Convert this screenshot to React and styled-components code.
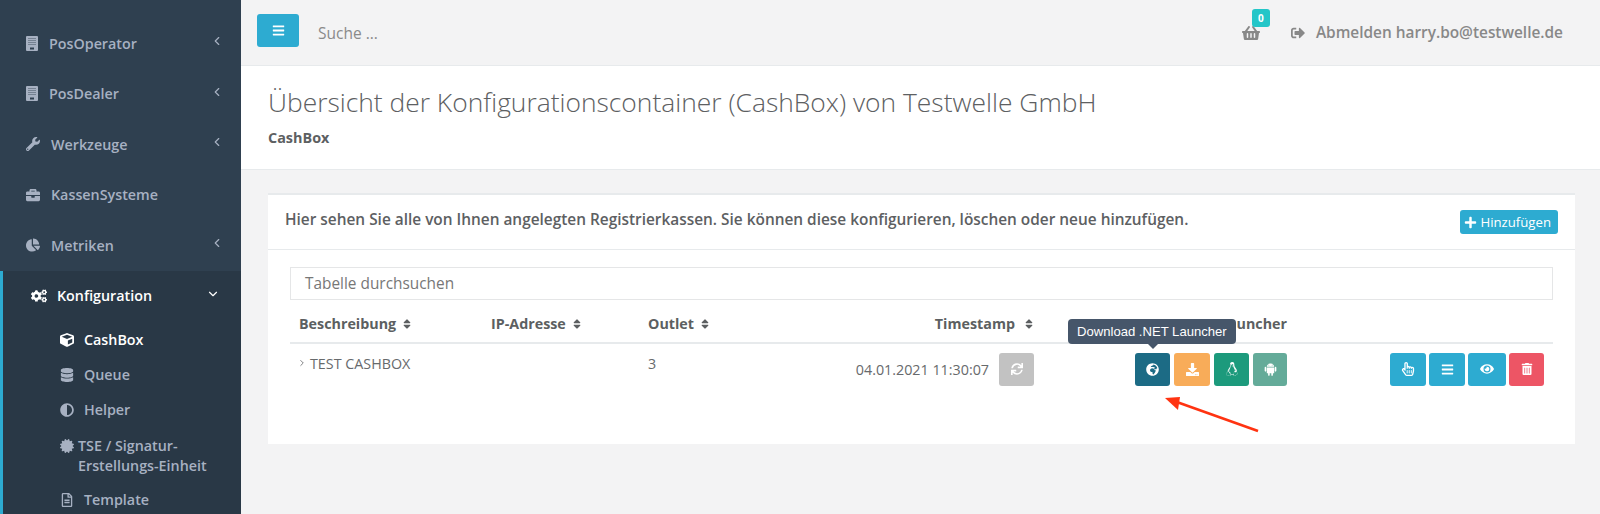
import React from 'react';
import styled, { createGlobalStyle } from 'styled-components';
import {
  FaWrench, FaBriefcase, FaChartPie, FaCogs, FaCube, FaDatabase, FaAdjust,
  FaCertificate, FaRegFileAlt, FaBars, FaShoppingBasket, FaSignOutAlt, FaPlus, FaSort,
  FaSync, FaGlobeAfrica, FaDownload, FaLinux, FaRegHandPointer, FaEye, FaTrashAlt,
} from 'react-icons/fa';
import { IoLogoAndroid } from 'react-icons/io';
import { ChevronLeft, ChevronDown, ChevronRight } from 'lucide-react';

const GlobalStyle = createGlobalStyle`
  html, body { margin: 0; height: 100%; overflow: hidden; }
  body { font-family: "Open Sans", "Liberation Sans", sans-serif; font-size: 14.3px; color: #676a6c; background: #f3f3f4; }
`;

// the operator/dealer icon is a tall block with stripes and a small door
const TerminalIcon = () => (
  <svg width="12" height="15" viewBox="0 0 12 15">
    <rect width="12" height="15" rx="1" fill="currentColor" />
    <path d="M2 2.5h8M2 4.5h8M2 6.5h8M2 8.5h8" stroke="#2f4050" strokeWidth="0.7" strokeOpacity="0.6" />
    <rect x="4" y="11.5" width="4" height="2" fill="#2f4050" />
  </svg>
);

const mainMenu = [
  { icon: TerminalIcon, label: 'PosOperator', arrow: true, gap: 11 },
  { icon: TerminalIcon, label: 'PosDealer', arrow: true, gap: 11 },
  { icon: FaWrench, label: 'Werkzeuge', arrow: true, gap: 11 },
  { icon: FaBriefcase, label: 'KassenSysteme', gap: 11 },
  { icon: FaChartPie, label: 'Metriken', arrow: true, gap: 11 },
];

const subMenu = [
  { icon: FaCube, label: 'CashBox', active: true },
  { icon: FaDatabase, label: 'Queue' },
  { icon: FaAdjust, label: 'Helper' },
  { icon: FaCertificate, label: 'TSE / Signatur-Erstellungs-Einheit', tight: true },
  { icon: FaRegFileAlt, label: 'Template' },
];

const App = () => (
  <Page>
    <GlobalStyle />
    <Sidebar>
      {mainMenu.map((item) => (
        <NavItem key={item.label}>
          <item.icon size={14} />
          <NavLabel $gap={item.gap}>{item.label}</NavLabel>
          {item.arrow && <NavArrow $shift={9}><ChevronLeft size={14} strokeWidth={2} /></NavArrow>}
        </NavItem>
      ))}
      <ActiveGroup>
        <ActiveHead>
          <FaCogs size={16} />
          <NavLabel $gap={10}>Konfiguration</NavLabel>
          <NavArrow $shift={5}><ChevronDown size={14} strokeWidth={2} /></NavArrow>
        </ActiveHead>
        {subMenu.map((item) => (
          <SubItem key={item.label} $active={item.active} $tight={item.tight}>
            <SubIcon $tight={item.tight}><item.icon size={14} /></SubIcon>
            <SubLabel $tight={item.tight}>{item.label}</SubLabel>
          </SubItem>
        ))}
      </ActiveGroup>
    </Sidebar>

    <Main>
      <TopBar>
        <MenuButton><FaBars size={13} /></MenuButton>
        <Search>Suche ...</Search>
        <Basket>
          <FaShoppingBasket size={18} />
          <BasketBadge>0</BasketBadge>
        </Basket>
        <Logout>
          <FaSignOutAlt size={14} />
          Abmelden harry.bo@testwelle.de
        </Logout>
      </TopBar>

      <Heading>
        <Title>Übersicht der Konfigurationscontainer (CashBox) von Testwelle GmbH</Title>
        <Crumb>CashBox</Crumb>
      </Heading>

      <Content>
        <Card>
          <CardHead>
            <CardText>Hier sehen Sie alle von Ihnen angelegten Registrierkassen. Sie können diese konfigurieren, löschen oder neue hinzufügen.</CardText>
            <AddButton><FaPlus size={13} />Hinzufügen</AddButton>
          </CardHead>
          <CardBody>
            <Filter>Tabelle durchsuchen</Filter>
            <HeadRow>
              <HeadCell>Beschreibung <FaSort size={12} /></HeadCell>
              <HeadCell>IP-Adresse <FaSort size={12} /></HeadCell>
              <HeadCell>Outlet <FaSort size={12} /></HeadCell>
              <HeadCell $right>Timestamp <SortGap><FaSort size={12} /></SortGap></HeadCell>
              <HeadCell $right>Launcher</HeadCell>
              <HeadCell />
            </HeadRow>
            <BodyRow>
              <BodyCell><RowChevron size={10} />TEST CASHBOX</BodyCell>
              <BodyCell />
              <BodyCell>3</BodyCell>
              <StampCell>
                04.01.2021 11:30:07
                <IconButton $bg="#c2c2c2" $w={35}><FaSync size={12} /></IconButton>
              </StampCell>
              <ButtonCell>
                <LauncherWrap>
                  <IconButton $bg="#1c6b85" $w={35}><FaGlobeAfrica size={13} /></IconButton>
                  <Tooltip>Download .NET Launcher</Tooltip>
                </LauncherWrap>
                <IconButton $bg="#f8ac59" $w={36}><FaDownload size={13} /></IconButton>
                <IconButton $bg="#1c9a7c" $w={35}><FaLinux size={14} /></IconButton>
                <IconButton $bg="#64ab99" $w={34}><IoLogoAndroid size={17} /></IconButton>
              </ButtonCell>
              <ActionCell>
                <IconButton $bg="#2dabd1" $w={36}><FaRegHandPointer size={14} /></IconButton>
                <IconButton $bg="#2dabd1" $w={36}><FaBars size={13} /></IconButton>
                <IconButton $bg="#2dabd1" $w={38}><FaEye size={14} /></IconButton>
                <IconButton $bg="#ed5565" $w={35}><FaTrashAlt size={12} /></IconButton>
              </ActionCell>
            </BodyRow>
          </CardBody>
          <RedArrow width="100" height="40" viewBox="0 0 100 40">
            <path d="M98 36 L14 6" stroke="#ff3311" strokeWidth="2.6" fill="none" />
            <path d="M5 3 L20 2 L18 15 Z" fill="#ff3311" />
          </RedArrow>
        </Card>
      </Content>
    </Main>
  </Page>
);

const Page = styled.div`
  display: flex;
  width: 1600px;
  height: 514px;
  overflow: hidden;
`;

const Sidebar = styled.nav`
  width: 241px;
  flex: none;
  padding-top: 18px;
  background: #2f4050;
  color: #a7b1c2;
  font-weight: 600;
  box-sizing: border-box;
`;

const NavItem = styled.div`
  display: flex;
  align-items: center;
  height: 50.5px;
  padding: 0 26px;
`;

const NavLabel = styled.span`
  margin-left: ${(p) => p.$gap}px;
`;

const NavArrow = styled.span`
  display: flex;
  margin-left: auto;
  margin-top: -4px;
  margin-right: -${(p) => p.$shift}px;
`;

const ActiveGroup = styled.div`
  background: #293846;
  border-left: 3px solid #2dabd1;
  color: #fff;
  height: 260px;
`;

const ActiveHead = styled.div`
  display: flex;
  align-items: center;
  height: 50px;
  padding: 0 26px 0 28px;
  margin-bottom: 2px;
`;

const SubItem = styled.div`
  display: flex;
  align-items: ${(p) => (p.$tight ? 'flex-start' : 'center')};
  padding-left: 57px;
  padding-right: 20px;
  height: ${(p) => (p.$tight ? '47px' : '35px')};
  color: ${(p) => (p.$active ? '#fff' : '#a7b1c2')};
  margin-top: ${(p) => (p.$tight ? '8px' : '0')};
`;

const SubIcon = styled.span`
  display: flex;
  width: 14px;
  flex: none;
  margin-top: ${(p) => (p.$tight ? '3px' : '0')};
`;

const SubLabel = styled.span`
  margin-left: ${(p) => (p.$tight ? '4px' : '10px')};
  line-height: 20px;
`;

const Main = styled.main`
  flex: 1;
  min-width: 0;
`;

const TopBar = styled.header`
  display: flex;
  align-items: center;
  height: 65px;
  padding: 0 37px 0 16px;
  border-bottom: 1px solid #e7eaec;
  background: #f3f3f4;
  color: #888;
`;

const MenuButton = styled.button`
  display: flex;
  align-items: center;
  justify-content: center;
  width: 42px;
  height: 33px;
  padding: 0;
  margin-top: -5px;
  border: 0;
  border-radius: 3px;
  background: #2dabd1;
  color: #fff;
`;

const Search = styled.div`
  margin-left: 19px;
  color: #8a8a8a;
  font-size: 15.5px;
`;

const Basket = styled.div`
  position: relative;
  display: flex;
  margin-left: auto;
`;

const BasketBadge = styled.span`
  position: absolute;
  top: -15px;
  left: 10px;
  width: 18px;
  height: 18px;
  border-radius: 3px;
  background: #23c6c8;
  color: #fff;
  font-size: 10px;
  font-weight: 700;
  line-height: 18px;
  text-align: center;
`;

const Logout = styled.div`
  display: flex;
  align-items: center;
  gap: 11px;
  margin-left: 31px;
  font-size: 15.4px;
  font-weight: 600;
`;

const Heading = styled.section`
  height: 104px;
  padding: 20px 27px 0;
  box-sizing: border-box;
  border-bottom: 1px solid #e7eaec;
  background: #fff;
`;

const Title = styled.h2`
  margin: 0;
  color: #5d6062;
  font-size: 26.4px;
  font-weight: 300;
  line-height: 33px;
`;

const Crumb = styled.div`
  margin-top: 9px;
  color: #5d6062;
  font-weight: 700;
  font-size: 14.4px;
`;

const Content = styled.div`
  padding: 23px 25px 0 27px;
`;

const Card = styled.section`
  position: relative;
  height: 251px;
  background: #fff;
  border-top: 2px solid #e7eaec;
  box-sizing: border-box;
`;

const CardHead = styled.div`
  display: flex;
  align-items: center;
  justify-content: space-between;
  height: 55px;
  padding: 0 17px;
  border-bottom: 1px solid #e7eaec;
  box-sizing: border-box;
`;

const CardText = styled.div`
  margin-top: -6px;
  color: #5d6062;
  font-size: 15.4px;
  font-weight: 600;
`;

const AddButton = styled.button`
  display: flex;
  align-items: center;
  gap: 3px;
  height: 24px;
  padding: 0 7px 0 4px;
  margin-top: 0;
  border: 0;
  border-radius: 3px;
  background: #2dabd1;
  color: #fff;
  font: 400 13.2px "Open Sans", sans-serif;
`;

const CardBody = styled.div`
  padding: 17px 22px 0;
`;

const Filter = styled.div`
  height: 33px;
  padding-left: 14px;
  border: 1px solid #e5e6e7;
  box-sizing: border-box;
  color: #777;
  font-size: 15.4px;
  line-height: 31px;
`;

const columns = '192px 157px 170px 235px 243px 1fr';

const HeadRow = styled.div`
  display: grid;
  grid-template-columns: ${columns};
  align-items: center;
  height: 44px;
  border-bottom: 2px solid #e7eaec;
  box-sizing: border-box;
`;

const HeadCell = styled.div`
  display: flex;
  align-items: center;
  justify-content: ${(p) => (p.$right ? 'flex-end' : 'flex-start')};
  gap: 5px;
  padding-left: 9px;
  font-weight: 700;
  color: #5c5f61;
  margin-top: 5px;
`;

const SortGap = styled.span`
  display: flex;
  margin-left: 3px;
  margin-right: 9px;
`;

const BodyRow = styled.div`
  display: grid;
  grid-template-columns: ${columns};
  align-items: center;
  height: 42px;
  padding-top: 4px;
`;

const BodyCell = styled.div`
  display: flex;
  align-items: center;
  gap: 3px;
  padding-left: 9px;
  margin-top: -12px;
`;

const RowChevron = styled(ChevronRight)`
  margin-left: -2px;
`;

const StampCell = styled.div`
  display: flex;
  align-items: center;
  justify-content: flex-end;
  gap: 10px;
  padding-right: 10px;
`;

const ButtonCell = styled.div`
  display: flex;
  justify-content: flex-end;
  gap: 4px;
`;

const ActionCell = styled.div`
  display: flex;
  justify-content: flex-end;
  gap: 3px;
  padding-right: 9px;
`;

const LauncherWrap = styled.div`
  position: relative;
  display: flex;
`;

const IconButton = styled.button`
  display: flex;
  align-items: center;
  justify-content: center;
  width: ${(p) => p.$w}px;
  height: 33px;
  padding: 0;
  border: 0;
  border-radius: 3px;
  background: ${(p) => p.$bg};
  color: #fff;
`;

const Tooltip = styled.div`
  position: absolute;
  left: -67px;
  top: -34px;
  height: 25px;
  padding: 0 9px;
  border-radius: 4px;
  background: #46566a;
  color: #fff;
  font: 13.1px/25px "Liberation Sans", Arial, sans-serif;
  white-space: nowrap;

  &::after {
    content: '';
    position: absolute;
    left: 80px;
    bottom: -5px;
    border: 5px solid transparent;
    border-bottom: 0;
    border-top-color: #46566a;
  }
`;

const RedArrow = styled.svg`
  position: absolute;
  left: 892px;
  top: 200px;
`;

export default App;
